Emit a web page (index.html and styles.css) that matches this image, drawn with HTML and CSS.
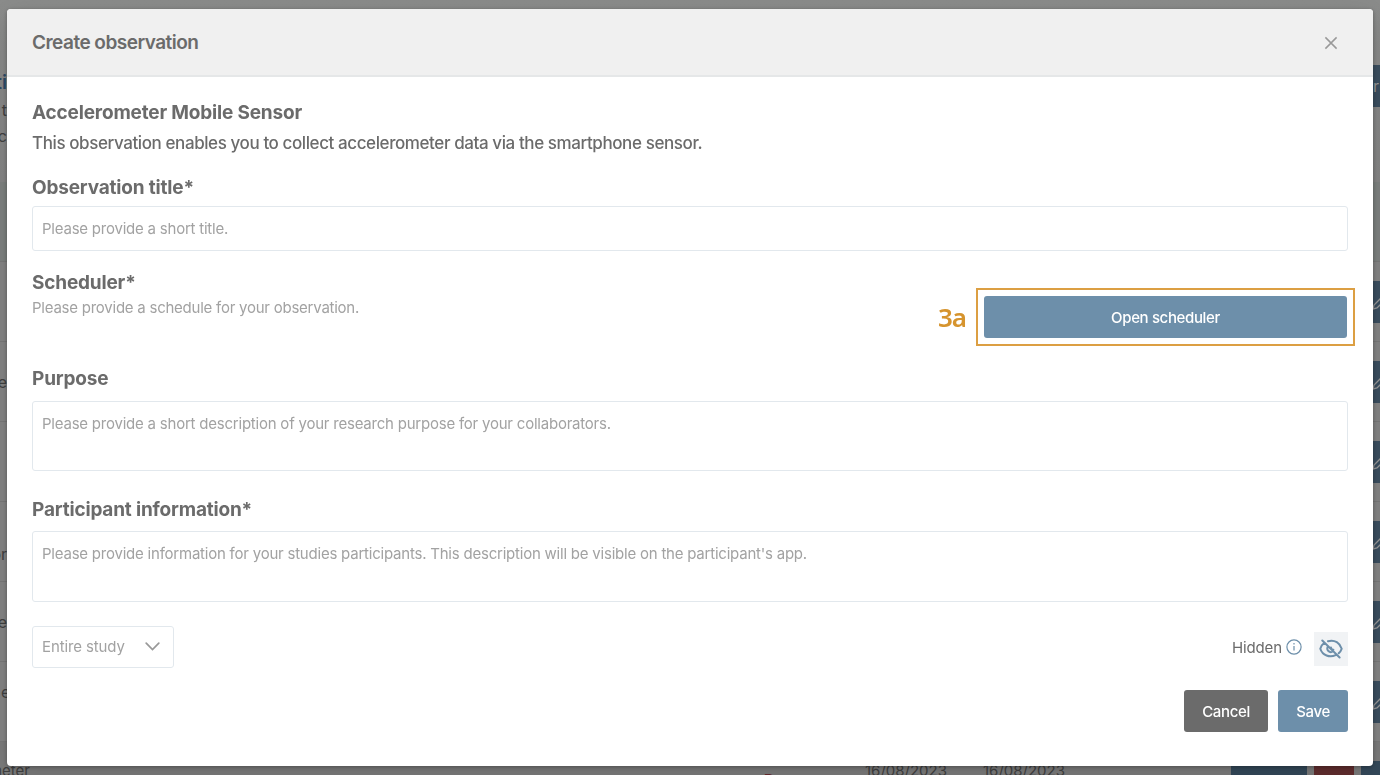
FILE: index.html
```
<!DOCTYPE html>
<html lang="en">
<head>
<meta charset="utf-8">
<title>Create observation</title>
<link rel="stylesheet" href="styles.css">
</head>
<body>
<svg class="defs" width="0" height="0"><symbol id="pencil" viewBox="0 0 16 16"><path d="M1 15l1-4L12 1l3 3L5 14z"/></symbol></svg>
<div class="page">
  <div class="page-head">
    <div class="intro"><div class="tab">ti</div><div>t</div><div>c</div></div>
    <div class="page-button">r</div>
  </div>
  <div class="row row-head"></div>
  <div class="row"><span></span><i class="edit"><svg><use href="#pencil"/></svg></i></div>
  <div class="row"><span>e</span><i class="edit"><svg><use href="#pencil"/></svg></i></div>
  <div class="row"><span></span><i class="edit"><svg><use href="#pencil"/></svg></i></div>
  <div class="row"><span class="second-line">or</span><i class="edit"><svg><use href="#pencil"/></svg></i></div>
  <div class="row"><span>e</span><i class="edit"><svg><use href="#pencil"/></svg></i></div>
  <div class="row"><span class="first-line">e</span><i class="edit"><svg><use href="#pencil"/></svg></i></div>
  <div class="row row-last">
    <span class="name">meter</span><b class="flag">ıD</b><span class="date">16/08/2023</span><span class="date">16/08/2023</span>
    <div class="actions"><i></i><i class="remove"></i><i></i></div>
  </div>
</div>
<main class="dialog">
  <header class="dialog-head">
    <h1>Create observation</h1>
    <svg class="close" width="14" height="14" viewBox="0 0 14 14"><path d="M1.400 1.400l11.200 11.200M12.600 1.400L1.400 12.600"/></svg>
  </header>
  <form class="dialog-body">
    <h2>Accelerometer Mobile Sensor</h2>
    <p class="lead">This observation enables you to collect accelerometer data via the smartphone sensor.</p>
    <h2 class="t-title">Observation title*</h2>
    <div class="field field-line">Please provide a short title.</div>
    <section class="scheduler">
      <div class="scheduler-text">
        <h2>Scheduler*</h2>
        <p class="hint">Please provide a schedule for your observation.</p>
      </div>
      <strong class="step">3a</strong>
      <div class="highlight"><div class="button">Open scheduler</div></div>
    </section>
    <h2 class="t-purpose">Purpose</h2>
    <div class="field field-purpose">Please provide a short description of your research purpose for your collaborators.</div>
    <h2 class="t-info">Participant information*</h2>
    <div class="field field-info">Please provide information for your studies participants. This description will be visible on the participant's app.</div>
    <div class="options">
      <div class="select"><span>Entire study</span><svg width="15" height="9" viewBox="0 0 15 9"><path d="M1.200 1.200l6.300 6.300 6.300-6.300"/></svg></div>
      <div class="visibility">
        <span>Hidden</span>
        <svg class="info" width="16" height="16" viewBox="0 0 16 16"><circle cx="8" cy="8" r="7.100"/><path d="M8 7v4.600M8 4.100v1.400"/></svg>
        <div class="toggle"><svg width="24" height="20" viewBox="0 0 24 20"><path d="M9 2.200C16 .1 21 4.500 22.700 9.700c-.5 1.700-1.600 3.200-3 4.500M5.100 4C3.100 5.500 1.800 7.600 1.300 9.700c2.100 6.700 9.500 9.200 15.300 6.400M3.300 1.500l17.300 17M9 7.300c-2.200 3.700 1.500 7.200 5 5.200M12 8.500c.1 1.400.8 2.200 2.400 2.300"/></svg></div>
      </div>
    </div>
    <footer class="footer"><div class="button cancel">Cancel</div><div class="button save">Save</div></footer>
  </form>
</main>
</body>
</html>
```
FILE: styles.css
```
* { box-sizing: border-box; }
body { margin: 0; height: 775px; overflow: hidden; font-family: Inter, "Liberation Sans", sans-serif; color: #6b6b6b; }
h1, h2, p { margin: 0; white-space: nowrap; }
.defs { display: block; }
.page { height: 775px; overflow: hidden; background: #858585; color: #414141; font-size: 16px; }
.page-head { height: 182px; display: flex; justify-content: space-between; background: linear-gradient(#8b8c8b, #858585); }
.intro { width: 8px; padding-top: 68px; line-height: 26px; overflow: hidden; }
.intro div { width: 7px; display: flex; justify-content: flex-end; }
.intro .tab { color: #2e4b68; font-size: 19px; font-weight: 600; line-height: 29px; }
.page-button { width: 7px; height: 42px; margin-top: 65px; background: #3b4f60; color: #999; line-height: 42px; overflow: hidden; }
.row { height: 80px; display: flex; justify-content: space-between; align-items: center; border-bottom: 1px solid #797979; }
.row-head { background: #7e8280; }
.row span { width: 7px; flex: none; display: flex; justify-content: flex-end; }
.row .second-line { padding-top: 24px; }
.row .first-line { padding-bottom: 20px; justify-content: flex-start; padding-left: 1px; }
.edit { width: 7px; height: 42px; background: #3b4f60; display: flex; align-items: center; overflow: hidden; }
.edit svg { flex: none; width: 16px; height: 16px; margin-left: -1px; fill: none; stroke: #999; stroke-width: 1.3; }
.row-last { background: #7c7c7c; align-items: flex-start; justify-content: flex-start; padding-top: 19px; font-size: 15px; line-height: 20px; }
.row-last .name { width: 30px; }
.flag { flex: none; width: 60px; margin-left: 730px; padding-top: 9px; color: #662b2f; line-height: 20px; }
.row-last .date { width: 80px; margin-left: 45px; justify-content: flex-start; white-space: nowrap; }
.row-last .date + .date { margin-left: 38px; }
.actions { flex: none; display: flex; gap: 7px; margin-left: 168px; }
.actions i { width: 76px; height: 42px; background: #34495a; }
.actions .remove { width: 40px; background: #622e2f; }
.dialog { position: fixed; top: 9px; left: 7px; width: 1366px; height: 757px; border-radius: 4px; background: #fff; box-shadow: 0 1px 4px rgba(0,0,0,.3), 0 9px 30px rgba(0,0,0,.14); }
.dialog-head { height: 68px; padding: 2px 35px 0 25px; display: flex; align-items: center; justify-content: space-between; border-bottom: 2px solid #e5e7e8; border-radius: 4px 4px 0 0; background: #f0f0f0; }
h1 { font-size: 19px; line-height: 26px; font-weight: 600; letter-spacing: -.52px; }
.close { margin-top: -1px; fill: none; stroke: #999; stroke-width: 1.5; }
.dialog-body { padding: 23px 25px 0; }
h2 { font-size: 19px; line-height: 26px; font-weight: 700; letter-spacing: -.18px; }
.lead { margin-top: 5px; font-size: 17px; line-height: 24px; font-weight: 500; letter-spacing: -.41px; }
.t-title { margin-top: 20px; }
.field { border: 1px solid #e2e8ed; border-radius: 3px; padding: 12px 9px 0; color: #a2a2a2; font-size: 15px; line-height: 20px; letter-spacing: -.22px; white-space: nowrap; }
.field-line { height: 45px; margin-top: 5px; }
.field-purpose { height: 70px; }
.field-info { height: 71px; }
.scheduler { height: 95px; margin-right: -8px; display: flex; }
.scheduler-text { width: 906px; padding-top: 19px; }
.hint { color: #a2a2a2; font-size: 15px; line-height: 22px; letter-spacing: -.24px; margin-top: 1px; }
.step { width: 38px; padding-top: 50px; color: #d6942e; font: 600 26px/32px "Noto Sans", sans-serif; letter-spacing: -1px; }
.highlight { width: 379px; height: 58px; margin-top: 37px; padding: 6px; border: 2px solid #dc9f43; }
.button { height: 42px; display: flex; align-items: center; justify-content: center; border-radius: 3px; background: #6d8faa; color: #fff; font-size: 15px; font-weight: 500; letter-spacing: -.36px; }
.t-purpose { margin-top: 20px; margin-bottom: 9px; }
.t-info { margin-top: 26px; margin-bottom: 8px; }
.options { margin-top: 24px; display: flex; justify-content: space-between; font-size: 15px; letter-spacing: -.12px; }
.select { width: 142px; height: 42px; border: 1px solid #e2e8ed; border-radius: 3px; padding: 0 13px 1px 9px; display: flex; align-items: center; justify-content: space-between; color: #a2a2a2; }
.select svg { fill: none; stroke: #999; stroke-width: 1.7; stroke-linecap: round; }
.visibility { height: 42px; display: flex; align-items: center; }
.info { margin: 0 12px 0 4px; fill: none; stroke: #6d8faa; stroke-width: 1.2; }
.toggle { width: 34px; height: 34px; margin-top: 4px; display: flex; align-items: center; justify-content: center; background: #f1f3f5; }
.toggle svg { fill: none; stroke: #6d8faa; stroke-width: 2; stroke-linecap: round; }
.footer { margin-top: 22px; display: flex; justify-content: flex-end; gap: 10px; }
.cancel { width: 84px; background: #6b6b6b; }
.save { width: 70px; }
```
